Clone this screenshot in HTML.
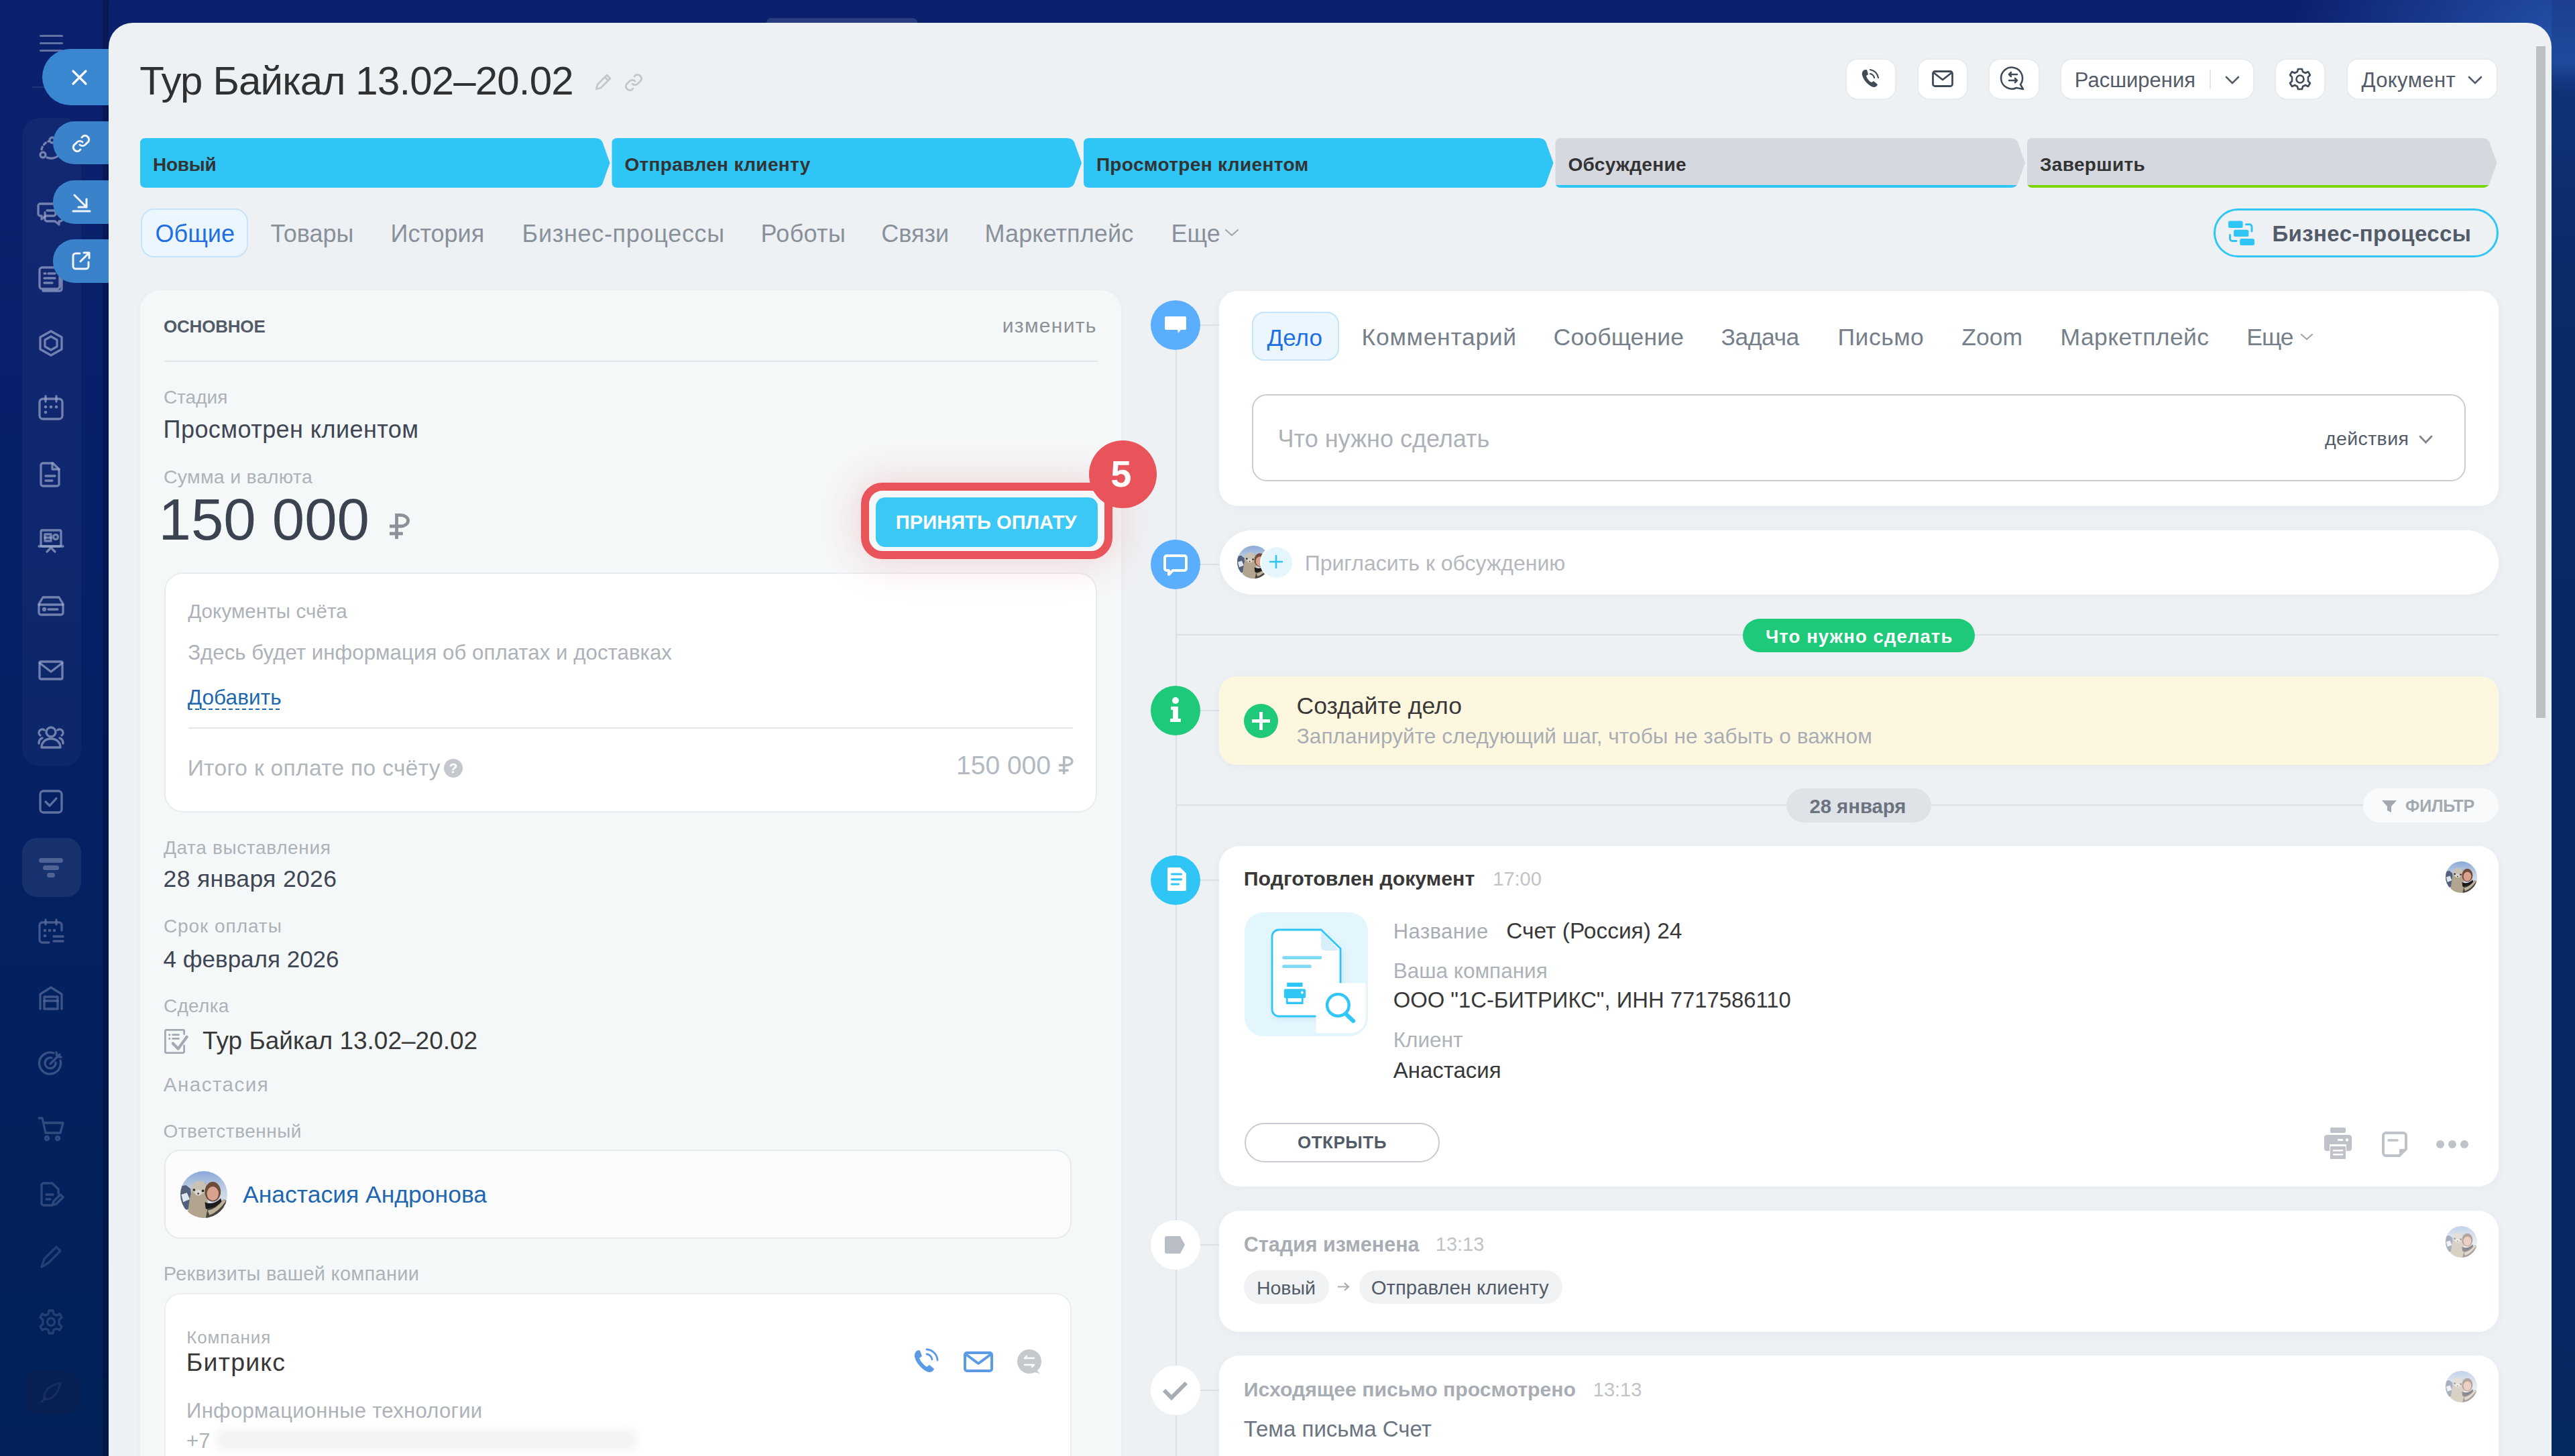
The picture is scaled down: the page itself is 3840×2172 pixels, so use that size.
<!DOCTYPE html><html><head><meta charset="utf-8"><title>Тур Байкал</title><style>*{margin:0;padding:0;box-sizing:border-box}
html,body{width:3840px;height:2172px;overflow:hidden}
body{position:relative;font-family:"Liberation Sans",sans-serif;background:#0b1d68}
.a{position:absolute}
.t{position:absolute;line-height:1;white-space:nowrap}
svg{overflow:visible}
</style></head><body><svg width="0" height="0" style="position:absolute"><defs><clipPath id="avc"><circle cx="50" cy="50" r="50"/></clipPath><linearGradient id="sky" x1="0" y1="0" x2="0" y2="1"><stop offset="0" stop-color="#8aa8d6"/><stop offset="0.45" stop-color="#c8d5e6"/><stop offset="1" stop-color="#eef2f6"/></linearGradient><symbol id="av" viewBox="0 0 100 100"><g clip-path="url(#avc)"><rect width="100" height="100" fill="url(#sky)"/><path d="M0 32 L12 30 L22 38 L24 80 L0 85z" fill="#52607c"/><path d="M2 50 L14 46 L20 60 L6 66z" fill="#dfe6ef"/><path d="M14 100 L20 58 L26 36 L40 22 L55 26 L58 60 L60 100z" fill="#b1a58f"/><ellipse cx="40" cy="36" rx="16" ry="15" fill="#c9c2b5"/><ellipse cx="38" cy="46" rx="7" ry="6" fill="#ddd8cf"/><circle cx="29" cy="40" r="2.6" fill="#2a2826"/><circle cx="48" cy="42" r="2.6" fill="#2a2826"/><circle cx="38" cy="48" r="2" fill="#3a3430"/><ellipse cx="69" cy="44" rx="17" ry="21" fill="#6e4c3a"/><ellipse cx="69" cy="48" rx="12.5" ry="15" fill="#d9a28c"/><path d="M52 66 Q70 74 86 58 L90 72 Q70 88 54 80z" fill="#1c1c1c"/><path d="M54 100 L58 80 Q75 80 92 60 L100 64 L100 100z" fill="#4a453d"/><path d="M58 84 Q76 82 92 60 L97 64 Q80 88 62 94z" fill="#bcb19b"/></g></symbol></defs></svg>
<div class="a" style="left:0.0px;top:0.0px;width:3840.0px;height:2172.0px;background:radial-gradient(ellipse 420px 260px at 3840px 60px,rgba(45,100,190,0.75),rgba(45,100,190,0) 100%),linear-gradient(180deg,#0c216e 0%,#07206a 35%,#03215f 70%,#012158 100%)"></div>
<div class="a" style="left:3805.0px;top:0.0px;width:35.0px;height:2172.0px;background:linear-gradient(180deg,#1b3f8e 0px,#1f4a9c 90px,#0f3278 135px,#0a2a6a 400px,#062766 1200px,#042862 2172px)"></div>
<div class="a" style="left:153.0px;top:0.0px;width:9.0px;height:2172.0px;background:rgba(0,0,20,0.25)"></div>
<div class="a" style="left:33.0px;top:176.0px;width:88.0px;height:967.0px;border-radius:26px;background:rgba(255,255,255,0.035)"></div>
<div class="a" style="left:33.0px;top:1250.0px;width:88.0px;height:88.0px;border-radius:22px;background:rgba(255,255,255,0.08)"></div>
<div class="a" style="left:38.0px;top:2046.0px;width:78.0px;height:63.0px;border-radius:18px;background:rgba(25,25,70,0.3)"></div>
<div class="a" style="left:59.0px;top:51.5px;width:35.0px;height:3.0px;background:rgba(200,210,235,0.45);border-radius:2px"></div>
<div class="a" style="left:59.0px;top:62.5px;width:35.0px;height:3.0px;background:rgba(200,210,235,0.45);border-radius:2px"></div>
<div class="a" style="left:59.0px;top:73.5px;width:35.0px;height:3.0px;background:rgba(200,210,235,0.45);border-radius:2px"></div>
<div class="a" style="left:48.0px;top:129.0px;width:52.0px;height:2.0px;background:rgba(255,255,255,0.08)"></div>
<svg class="a" style="left:56.0px;top:201.0px;opacity:1" width="40" height="40" viewBox="0 0 40 40"><g fill="none" stroke="rgba(160,172,205,0.68)" stroke-width="3.3" stroke-linecap="round" stroke-linejoin="round"><circle cx="22" cy="8" r="4"/><circle cx="8" cy="30" r="4"/><path d="M6 22a16 16 0 0 1 10-12" stroke-dasharray="4 4"/><path d="M14 34a16 16 0 0 0 18-4"/></g></svg>
<svg class="a" style="left:56.0px;top:296.0px;opacity:1" width="40" height="40" viewBox="0 0 40 40"><g fill="none" stroke="rgba(160,172,205,0.68)" stroke-width="3.3" stroke-linecap="round" stroke-linejoin="round"><path d="M4 8h20a3 3 0 0 1 3 3v12a3 3 0 0 1-3 3H12l-6 5v-5H4a3 3 0 0 1-3-3V11a3 3 0 0 1 3-3z"/><path d="M14 18h20a3 3 0 0 1 3 3v10a3 3 0 0 1-3 3h-2v5l-6-5H14a3 3 0 0 1-3-3V21"/></g></svg>
<svg class="a" style="left:56.0px;top:395.0px;opacity:1" width="40" height="40" viewBox="0 0 40 40"><g fill="none" stroke="rgba(160,172,205,0.68)" stroke-width="3.3" stroke-linecap="round" stroke-linejoin="round"><rect x="3" y="4" width="30" height="32" rx="4"/><path d="M36 10v26a3 3 0 0 1-3 3H8"/><path d="M10 13h2M16 13h10M10 20h16M10 27h12"/></g></svg>
<svg class="a" style="left:56.0px;top:492.0px;opacity:1" width="40" height="40" viewBox="0 0 40 40"><g fill="none" stroke="rgba(160,172,205,0.68)" stroke-width="3.3" stroke-linecap="round" stroke-linejoin="round"><path d="M20 2l16 9v18l-16 9-16-9V11z"/><path d="M20 10l9 5v10l-9 5-9-5V15z"/></g></svg>
<svg class="a" style="left:56.0px;top:589.0px;opacity:1" width="40" height="40" viewBox="0 0 40 40"><g fill="none" stroke="rgba(160,172,205,0.68)" stroke-width="3.3" stroke-linecap="round" stroke-linejoin="round"><rect x="3" y="6" width="34" height="30" rx="5"/><path d="M12 2v8M28 2v8"/></g><g fill="rgba(160,172,205,0.68)"><circle cx="12" cy="18" r="2.3"/><circle cx="20" cy="18" r="2.3"/><circle cx="28" cy="18" r="2.3"/><circle cx="12" cy="26" r="2.3"/></g></svg>
<svg class="a" style="left:56.0px;top:688.0px;opacity:1" width="40" height="40" viewBox="0 0 40 40"><g fill="none" stroke="rgba(160,172,205,0.68)" stroke-width="3.3" stroke-linecap="round" stroke-linejoin="round"><path d="M8 3h15l9 9v22a3 3 0 0 1-3 3H8a3 3 0 0 1-3-3V6a3 3 0 0 1 3-3z"/><path d="M22 3v9h10M12 22h14M12 29h10"/></g></svg>
<svg class="a" style="left:56.0px;top:787.0px;opacity:1" width="40" height="40" viewBox="0 0 40 40"><g fill="none" stroke="rgba(160,172,205,0.68)" stroke-width="3.3" stroke-linecap="round" stroke-linejoin="round"><path d="M2 28h36"/><rect x="5" y="4" width="30" height="24" rx="2"/><rect x="11" y="10" width="9" height="10"/><path d="M11 15h9"/><circle cx="27" cy="14" r="3.5"/><path d="M14 36l6-6 6 6"/></g></svg>
<svg class="a" style="left:56.0px;top:883.0px;opacity:1" width="40" height="40" viewBox="0 0 40 40"><g fill="none" stroke="rgba(160,172,205,0.68)" stroke-width="3.3" stroke-linecap="round" stroke-linejoin="round"><path d="M8 8h24l6 10v13a3 3 0 0 1-3 3H5a3 3 0 0 1-3-3V18z"/><path d="M2 19h36"/><circle cx="10" cy="26" r="1.5"/><path d="M16 26h14"/></g></svg>
<svg class="a" style="left:56.0px;top:980.0px;opacity:1" width="40" height="40" viewBox="0 0 40 40"><g fill="none" stroke="rgba(160,172,205,0.68)" stroke-width="3.3" stroke-linecap="round" stroke-linejoin="round"><rect x="3" y="7" width="34" height="26" rx="2"/><path d="M3 9l17 13 17-13"/></g></svg>
<svg class="a" style="left:56.0px;top:1079.0px;opacity:1" width="40" height="40" viewBox="0 0 40 40"><g fill="none" stroke="rgba(160,172,205,0.68)" stroke-width="3.3" stroke-linecap="round" stroke-linejoin="round"><circle cx="20" cy="13" r="7"/><path d="M6 36c0-8 6-13 14-13s14 5 14 13z"/><path d="M10 10a5 5 0 0 0-6 8M30 10a5 5 0 0 1 6 8M2 30c0-4 2-7 5-8M38 30c0-4-2-7-5-8"/></g></svg>
<svg class="a" style="left:56.0px;top:1176.0px;opacity:0.85" width="40" height="40" viewBox="0 0 40 40"><g fill="none" stroke="rgba(160,172,205,0.68)" stroke-width="3.3" stroke-linecap="round" stroke-linejoin="round"><rect x="4" y="4" width="32" height="32" rx="5"/><path d="M12 20l6 6 10-11"/></g></svg>
<svg class="a" style="left:56.0px;top:1274.0px;opacity:0.6" width="40" height="40" viewBox="0 0 40 40"><g fill="rgba(160,172,205,0.68)"><rect x="2" y="6" width="36" height="7" rx="3.5"/><rect x="8" y="17" width="24" height="7" rx="3.5"/><rect x="14" y="28" width="12" height="7" rx="3.5"/></g></svg>
<svg class="a" style="left:56.0px;top:1370.0px;opacity:0.6" width="40" height="40" viewBox="0 0 40 40"><g fill="none" stroke="rgba(160,172,205,0.68)" stroke-width="3.3" stroke-linecap="round" stroke-linejoin="round"><path d="M36 18V10a4 4 0 0 0-4-4H7a4 4 0 0 0-4 4v22a4 4 0 0 0 4 4h10"/><path d="M12 2v7M28 2v7M24 27h14M24 34h14"/></g><g fill="rgba(160,172,205,0.68)"><circle cx="11" cy="18" r="2.3"/><circle cx="18" cy="18" r="2.3"/><circle cx="25" cy="18" r="2.3"/><circle cx="11" cy="26" r="2.3"/></g></svg>
<svg class="a" style="left:56.0px;top:1469.0px;opacity:0.55" width="40" height="40" viewBox="0 0 40 40"><g fill="none" stroke="rgba(160,172,205,0.68)" stroke-width="3.3" stroke-linecap="round" stroke-linejoin="round"><path d="M4 36V14L20 4l16 10v22"/><rect x="10" y="18" width="20" height="18"/><path d="M10 24h20"/></g></svg>
<svg class="a" style="left:56.0px;top:1566.0px;opacity:0.5" width="40" height="40" viewBox="0 0 40 40"><g fill="none" stroke="rgba(160,172,205,0.68)" stroke-width="3.3" stroke-linecap="round" stroke-linejoin="round"><path d="M34 16a16 16 0 1 1-10-11"/><path d="M27 19a8 8 0 1 1-6-7"/><path d="M19 21l14-14M28 4l1 6 6 1"/></g></svg>
<svg class="a" style="left:56.0px;top:1664.0px;opacity:0.45" width="40" height="40" viewBox="0 0 40 40"><g fill="none" stroke="rgba(160,172,205,0.68)" stroke-width="3.3" stroke-linecap="round" stroke-linejoin="round"><path d="M2 4h5l5 22h22l4-15H10"/><circle cx="14" cy="34" r="2.5"/><circle cx="30" cy="34" r="2.5"/></g></svg>
<svg class="a" style="left:56.0px;top:1762.0px;opacity:0.42" width="40" height="40" viewBox="0 0 40 40"><g fill="none" stroke="rgba(160,172,205,0.68)" stroke-width="3.3" stroke-linecap="round" stroke-linejoin="round"><path d="M20 36H9a3 3 0 0 1-3-3V6a3 3 0 0 1 3-3h13l9 9v6"/><path d="M13 20h10M13 27h6M22 36l2-6 10-10 4 4-10 10z"/></g></svg>
<svg class="a" style="left:56.0px;top:1854.0px;opacity:0.32" width="40" height="40" viewBox="0 0 40 40"><g fill="none" stroke="rgba(160,172,205,0.68)" stroke-width="3.3" stroke-linecap="round" stroke-linejoin="round"><path d="M6 36l4-12 18-18 6 6-18 18z"/></g></svg>
<svg class="a" style="left:56.0px;top:1952.0px;opacity:0.32" width="40" height="40" viewBox="0 0 40 40"><g fill="none" stroke="rgba(160,172,205,0.68)" stroke-width="3.3" stroke-linecap="round" stroke-linejoin="round"><circle cx="20" cy="20" r="5.5"/><path d="M17 3h6l1 5 4 2 5-2 3 5-4 4v6l4 4-3 5-5-2-4 2-1 5h-6l-1-5-4-2-5 2-3-5 4-4v-6l-4-4 3-5 5 2 4-2z"/></g></svg>
<svg class="a" style="left:56.0px;top:2057.0px;opacity:0.15" width="40" height="40" viewBox="0 0 40 40"><g fill="none" stroke="rgba(160,172,205,0.68)" stroke-width="3.3" stroke-linecap="round" stroke-linejoin="round"><path d="M10 30c-2-8 4-20 24-24-4 20-16 26-24 24z"/><path d="M6 34l6-6"/></g></svg>
<div class="a" style="left:162.0px;top:34.0px;width:3643.0px;height:2266.0px;background:#eef1f4;border-radius:36px 36px 0 0"></div>
<div class="a" style="left:1143.0px;top:27.0px;width:225.0px;height:7.0px;background:rgba(255,255,255,0.12);border-radius:10px 10px 0 0"></div>
<div class="a" style="left:3782.0px;top:69.0px;width:14.0px;height:1002.0px;background:#bcc0c3"></div>
<div class="a" style="left:63.0px;top:73.0px;width:99.0px;height:84.0px;background:#3a87d1;border-radius:42px 0 0 42px"></div>
<svg class="a" style="left:107.0px;top:104.0px;" width="23" height="23" viewBox="0 0 23 23"><path d="M2 2L21 21M21 2L2 21" stroke="#fff" stroke-width="3.2" stroke-linecap="round"/></svg>
<div class="a" style="left:79.0px;top:181.0px;width:83.0px;height:64.0px;background:#3a82c9;border-radius:32px 0 0 32px"></div>
<div class="a" style="left:79.0px;top:269.0px;width:83.0px;height:65.0px;background:#3a82c9;border-radius:32px 0 0 32px"></div>
<div class="a" style="left:79.0px;top:357.0px;width:83.0px;height:65.0px;background:#3a82c9;border-radius:32px 0 0 32px"></div>
<svg class="a" style="left:106.0px;top:199.0px;" width="30" height="30" viewBox="0 0 30 30"><g fill="none" stroke="#f2f5f9" stroke-width="3" stroke-linecap="round"><path d="M13 17a6 6 0 0 0 8 0l5-5a6 6 0 0 0-8-8l-2 2"/><path d="M17 13a6 6 0 0 0-8 0l-5 5a6 6 0 0 0 8 8l2-2"/></g></svg>
<svg class="a" style="left:106.0px;top:287.0px;" width="30" height="30" viewBox="0 0 30 30"><g fill="none" stroke="#f2f5f9" stroke-width="3" stroke-linecap="round"><path d="M5 4l18 18M23 10v12H11M3 28h25"/></g></svg>
<svg class="a" style="left:106.0px;top:374.0px;" width="30" height="30" viewBox="0 0 30 30"><g fill="none" stroke="#f2f5f9" stroke-width="3" stroke-linecap="round" stroke-linejoin="round"><path d="M13 4H7a4 4 0 0 0-4 4v15a4 4 0 0 0 4 4h15a4 4 0 0 0 4-4v-6"/><path d="M14 16L27 3M19 3h8v8"/></g></svg>
<div class="t " style="top:90.7px;font-size:60px;color:#303030;left:208.2px;letter-spacing:-0.85px;">Тур Байкал 13.02–20.02</div>
<svg class="a" style="left:886.0px;top:110.0px;" width="26" height="26" viewBox="0 0 26 26"><g fill="none" stroke="#c3c6ca" stroke-width="2.5" stroke-linejoin="round"><path d="M3 23l2-7L19 2l5 5L10 21z"/><path d="M16 5l5 5"/></g></svg>
<svg class="a" style="left:930.0px;top:108.0px;" width="30" height="30" viewBox="0 0 30 30"><g fill="none" stroke="#c3c6ca" stroke-width="2.8" stroke-linecap="round"><path d="M13 17a6 6 0 0 0 8 0l5-5a6 6 0 0 0-8-8l-2 2"/><path d="M17 13a6 6 0 0 0-8 0l-5 5a6 6 0 0 0 8 8l2-2"/></g></svg>
<div class="a" style="left:2754.0px;top:88.5px;width:72.0px;height:58.5px;background:#fff;border-radius:16px;box-shadow:0 0 0 2px rgba(0,0,0,0.025)"></div>
<div class="a" style="left:2861.0px;top:88.5px;width:72.0px;height:58.5px;background:#fff;border-radius:16px;box-shadow:0 0 0 2px rgba(0,0,0,0.025)"></div>
<div class="a" style="left:2967.0px;top:88.5px;width:73.0px;height:58.5px;background:#fff;border-radius:16px;box-shadow:0 0 0 2px rgba(0,0,0,0.025)"></div>
<div class="a" style="left:3074.0px;top:88.5px;width:286.0px;height:58.5px;background:#fff;border-radius:16px;box-shadow:0 0 0 2px rgba(0,0,0,0.025)"></div>
<div class="a" style="left:3394.0px;top:88.5px;width:72.0px;height:58.5px;background:#fff;border-radius:16px;box-shadow:0 0 0 2px rgba(0,0,0,0.025)"></div>
<div class="a" style="left:3501.0px;top:88.5px;width:222.0px;height:58.5px;background:#fff;border-radius:16px;box-shadow:0 0 0 2px rgba(0,0,0,0.025)"></div>
<svg class="a" style="left:2775.0px;top:102.0px;" width="28" height="30" viewBox="0 0 28 30"><g fill="#404b58"><path d="M6 2c-3 1-5 4-4 8 2 7 7 13 14 17 3 2 6 1 8-1l1-2-6-5-3 2c-4-2-7-6-8-10l3-2-2-7z"/></g><g fill="none" stroke="#404b58" stroke-width="2.2" stroke-linecap="round"><path d="M14 8a8 8 0 0 1 6 6"/><path d="M14 2a14 14 0 0 1 12 12"/></g></svg>
<svg class="a" style="left:2881.0px;top:105.0px;" width="32" height="25" viewBox="0 0 32 25"><g fill="none" stroke="#404b58" stroke-width="2.8" stroke-linejoin="round"><rect x="1.5" y="1.5" width="29" height="22" rx="3"/><path d="M2 3l14 11L30 3"/></g></svg>
<svg class="a" style="left:2985.0px;top:100.0px;" width="35" height="35" viewBox="0 0 35 35"><g fill="none" stroke="#404b58" stroke-width="2.6" stroke-linecap="round" stroke-linejoin="round"><path d="M28 26A16 16 0 1 0 22 31l10 2z"/><path d="M11 11h12M11 11l3-3M11 11l3 3M23 20H11M23 20l-3-3M23 20l-3 3"/></g></svg>
<div class="t " style="top:104.4px;font-size:31px;color:#525c69;left:3093.8px;">Расширения</div>
<div class="a" style="left:3295.0px;top:104.0px;width:2.0px;height:28.0px;background:#e3e6e9"></div>
<svg class="a" style="left:3318.0px;top:113.0px;" width="22" height="13" viewBox="0 0 22 13"><path d="M2 2l9 9 9-9" fill="none" stroke="#525c69" stroke-width="2.6" stroke-linecap="round"/></svg>
<svg class="a" style="left:3412.0px;top:100.0px;" width="36" height="36" viewBox="0 0 36 36"><g fill="none" stroke="#404b58" stroke-width="2.6" stroke-linejoin="round"><circle cx="18" cy="18" r="5.5"/><path d="M15 3h6l1 4 4 2 4-2 3 5-3 3v6l3 3-3 5-4-2-4 2-1 4h-6l-1-4-4-2-4 2-3-5 3-3v-6l-3-3 3-5 4 2 4-2z"/></g></svg>
<div class="t " style="top:104.4px;font-size:31px;color:#525c69;left:3521.4px;letter-spacing:0.4px;">Документ</div>
<svg class="a" style="left:3680.0px;top:113.0px;" width="22" height="13" viewBox="0 0 22 13"><path d="M2 2l9 9 9-9" fill="none" stroke="#525c69" stroke-width="2.6" stroke-linecap="round"/></svg>
<svg class="a" style="left:0.0px;top:206.0px;" width="3840" height="74" viewBox="0 0 3840 74"><path d="M217.0,0 H887.5 Q895.5,0 898.5,6 L909.5,37.0 L898.5,68 Q895.5,74 887.5,74 H217.0 Q209.0,74 209.0,66 V8 Q209.0,0 217.0,0 Z" fill="#2fc6f6"/><path d="M920.5,0 H1591.0 Q1599.0,0 1602.0,6 L1613.0,37.0 L1602.0,68 Q1599.0,74 1591.0,74 H920.5 Q912.5,74 912.5,66 V8 Q912.5,0 920.5,0 Z" fill="#2fc6f6"/><path d="M1624.0,0 H2294.5 Q2302.5,0 2305.5,6 L2316.5,37.0 L2305.5,68 Q2302.5,74 2294.5,74 H1624.0 Q1616.0,74 1616.0,66 V8 Q1616.0,0 1624.0,0 Z" fill="#2fc6f6"/><path d="M2327.5,0 H2998.0 Q3006.0,0 3009.0,6 L3020.0,37.0 L3009.0,68 Q3006.0,74 2998.0,74 H2327.5 Q2319.5,74 2319.5,66 V8 Q2319.5,0 2327.5,0 Z" fill="#d5d8de"/><path d="M3031.0,0 H3701.5 Q3709.5,0 3712.5,6 L3723.5,37.0 L3712.5,68 Q3709.5,74 3701.5,74 H3031.0 Q3023.0,74 3023.0,66 V8 Q3023.0,0 3031.0,0 Z" fill="#d5d8de"/><clipPath id="c4"><path d="M2327.5,0 H2998.0 Q3006.0,0 3009.0,6 L3020.0,37.0 L3009.0,68 Q3006.0,74 2998.0,74 H2327.5 Q2319.5,74 2319.5,66 V8 Q2319.5,0 2327.5,0 Z"/></clipPath><rect x="2319.5" y="70" width="700.5" height="4" fill="#2fc6f6" clip-path="url(#c4)"/><clipPath id="c5"><path d="M3031.0,0 H3701.5 Q3709.5,0 3712.5,6 L3723.5,37.0 L3712.5,68 Q3709.5,74 3701.5,74 H3031.0 Q3023.0,74 3023.0,66 V8 Q3023.0,0 3031.0,0 Z"/></clipPath><rect x="3023.0" y="70" width="700.5" height="4" fill="#7bd500" clip-path="url(#c5)"/></svg>
<div class="t " style="top:231.8px;font-size:28px;color:#333;left:227.9px;font-weight:700;letter-spacing:-0.2px;">Новый</div>
<div class="t " style="top:231.8px;font-size:28px;color:#333;left:931.4px;font-weight:700;letter-spacing:0.35px;">Отправлен клиенту</div>
<div class="t " style="top:231.8px;font-size:28px;color:#333;left:1634.9px;font-weight:700;letter-spacing:0.35px;">Просмотрен клиентом</div>
<div class="t " style="top:231.8px;font-size:28px;color:#333;left:2338.4px;font-weight:700;letter-spacing:0.35px;">Обсуждение</div>
<div class="t " style="top:231.8px;font-size:28px;color:#333;left:3041.9px;font-weight:700;letter-spacing:0.35px;">Завершить</div>
<div class="a" style="left:209.6px;top:311.0px;width:160.8px;height:73.0px;background:#ebf6fe;border:2px solid #c3e4fb;border-radius:20px"></div>
<div class="t " style="top:331.2px;font-size:36px;color:#1d6fe3;left:231.6px;">Общие</div>
<div class="t " style="top:331.2px;font-size:36px;color:#88909a;left:403.6px;">Товары</div>
<div class="t " style="top:331.2px;font-size:36px;color:#88909a;left:582.6px;">История</div>
<div class="t " style="top:331.2px;font-size:36px;color:#88909a;left:778.6px;letter-spacing:0.7px;">Бизнес-процессы</div>
<div class="t " style="top:331.2px;font-size:36px;color:#88909a;left:1134.6px;letter-spacing:0.3px;">Роботы</div>
<div class="t " style="top:331.2px;font-size:36px;color:#88909a;left:1314.2px;">Связи</div>
<div class="t " style="top:331.2px;font-size:36px;color:#88909a;left:1468.6px;letter-spacing:0.1px;">Маркетплейс</div>
<div class="t " style="top:331.2px;font-size:36px;color:#88909a;left:1746.6px;">Еще</div>
<svg class="a" style="left:1826.0px;top:341.0px;" width="22" height="13" viewBox="0 0 22 13"><path d="M2 2l9 8 9-8" fill="none" stroke="#a1a7ae" stroke-width="2.2" stroke-linecap="round"/></svg>
<div class="a" style="left:3301.0px;top:311.0px;width:425.0px;height:73.0px;border:3px solid #2fc6f6;border-radius:37px"></div>
<svg class="a" style="left:3323.0px;top:330.0px;" width="40" height="37" viewBox="0 0 40 37"><g fill="#2fc6f6"><rect x="0" y="-0.5" width="21.6" height="10.5" rx="2.5"/><rect x="8" y="12.7" width="22.4" height="10.2" rx="2.5"/><rect x="17.2" y="25.9" width="21.8" height="10" rx="2.5"/></g><g fill="none" stroke="#2fc6f6" stroke-width="3" stroke-linecap="round"><path d="M26.5,4.7 H31.5 a3.5,3.5 0 0 1 3.5,3.5 V15"/><path d="M2.5,20.5 V26 a3.5,3.5 0 0 0 3.5,3.5 H12"/></g></svg>
<div class="t " style="top:332.1px;font-size:33px;color:#525c69;left:3388.4px;font-weight:700;letter-spacing:0.4px;">Бизнес-процессы</div>
<div class="a" style="left:209.0px;top:433.0px;width:1463.0px;height:1867.0px;background:#f5f8f9;border-radius:30px;box-shadow:0 2px 10px rgba(60,70,90,0.03)"></div>
<div class="t " style="top:474.0px;font-size:26px;color:#525c69;left:244.0px;font-weight:700;letter-spacing:-0.2px;">ОСНОВНОЕ</div>
<div class="t " style="top:471.0px;font-size:30px;color:#8e9196;left:1494.8px;letter-spacing:1.3px;">изменить</div>
<div class="a" style="left:245.0px;top:538.0px;width:1392.0px;height:2.0px;background:#e3e6ea"></div>
<div class="t " style="top:579.3px;font-size:28px;color:#adb2b8;left:243.9px;">Стадия</div>
<div class="t " style="top:622.5px;font-size:36px;color:#3e4654;left:243.6px;letter-spacing:0.45px;">Просмотрен клиентом</div>
<div class="t " style="top:696.9px;font-size:28.5px;color:#adb2b8;left:243.9px;letter-spacing:0.3px;">Сумма и валюта</div>
<div class="t " style="top:731.3px;font-size:87px;color:#3b4250;left:236.5px;">150 000</div>
<svg class="a" style="left:581.0px;top:766.0px;" width="30" height="38" viewBox="0 0 30 38"><g fill="none" stroke="#8a9199" stroke-width="4.8"><path d="M10.50,38 V2.40 H16.50 A11.10,8.30 0 0 1 16.50,19.00 H0"/><path d="M0,30.02 H19.80"/></g></svg>
<div class="a" style="left:245.0px;top:854.0px;width:1391.0px;height:358.0px;background:#fff;border:2px solid #e9ecef;border-radius:28px"></div>
<div class="t " style="top:897.3px;font-size:29.5px;color:#adb2b8;left:280.2px;letter-spacing:0.1px;">Документы счёта</div>
<div class="t " style="top:958.1px;font-size:31.2px;color:#adb2b8;left:280.2px;letter-spacing:0.05px;">Здесь будет информация об оплатах и доставках</div>
<div class="t " style="top:1024.5px;font-size:31.5px;color:#2067b0;left:279.7px;letter-spacing:0.1px;">Добавить</div>
<div class="a" style="left:281.0px;top:1056.5px;width:140.0px;height:2.0px;background:repeating-linear-gradient(90deg,#2067b0 0 6px,transparent 6px 10px)"></div>
<div class="a" style="left:281.0px;top:1084.5px;width:1319.0px;height:2.0px;background:#e3e6ea"></div>
<div class="t " style="top:1128.6px;font-size:33.5px;color:#b1b6bc;left:279.7px;letter-spacing:0.35px;">Итого к оплате по счёту</div>
<div class="a" style="left:662px;top:1132px;width:28px;height:28px;border-radius:50%;background:#c4c8cd;color:#fff;font:700 21px/28px 'Liberation Sans',sans-serif;text-align:center">?</div>
<div class="t " style="top:1121.7px;font-size:39px;color:#b3b9c0;right:2273.0px;">150 000</div>
<svg class="a" style="left:1579.0px;top:1128.0px;" width="22" height="27" viewBox="0 0 22 27"><g fill="none" stroke="#b3b9c0" stroke-width="3.5"><path d="M7.69,27 V1.75 H12.10 A8.15,5.88 0 0 1 12.10,13.50 H0"/><path d="M0,21.33 H14.52"/></g></svg>
<div class="a" style="left:1284.0px;top:720.0px;width:375.0px;height:114.0px;border:12px solid #e8545a;border-radius:32px;background:#f5f8f9;box-shadow:0 0 55px 10px rgba(232,84,90,0.19)"></div>
<div class="a" style="left:1306.0px;top:742.0px;width:331.0px;height:74.0px;background:#3bc8f5;border-radius:14px"></div>
<div class="t " style="top:765.0px;font-size:29px;color:#fff;left:1335.8px;font-weight:700;letter-spacing:0.1px;">ПРИНЯТЬ ОПЛАТУ</div>
<div class="a" style="left:1623.5px;top:657px;width:101px;height:101px;border-radius:50%;background:#e8545a"></div>
<div class="t " style="top:678.6px;font-size:56px;color:#fff;left:1671.8px;font-weight:700;transform:translateX(-50%);">5</div>
<div class="t " style="top:1251.3px;font-size:28px;color:#adb2b8;left:243.9px;letter-spacing:0.65px;">Дата выставления</div>
<div class="t " style="top:1293.7px;font-size:35.5px;color:#3e4654;left:243.6px;letter-spacing:0.35px;">28 января 2026</div>
<div class="t " style="top:1368.3px;font-size:28px;color:#adb2b8;left:243.9px;letter-spacing:0.95px;">Срок оплаты</div>
<div class="t " style="top:1413.2px;font-size:35px;color:#3e4654;left:243.6px;">4 февраля 2026</div>
<div class="t " style="top:1487.3px;font-size:28px;color:#adb2b8;left:243.9px;letter-spacing:0.3px;">Сделка</div>
<svg class="a" style="left:245.0px;top:1535.0px;" width="37" height="37" viewBox="0 0 37 37"><g fill="none" stroke="#a3a9b2" stroke-width="2.8" stroke-linecap="round" stroke-linejoin="round"><path d="M29.6,7.5 V3 a1.6,1.6 0 0 0 -1.6,-1.6 H3 a1.6,1.6 0 0 0 -1.6,1.6 V34 a1.6,1.6 0 0 0 1.6,1.6 H28 a1.6,1.6 0 0 0 1.6,-1.6 V25"/><path d="M12.5,8.7 H21.5 M12.5,14.4 H21.5"/></g><g fill="#a3a9b2"><circle cx="7.7" cy="8.7" r="1.6"/><circle cx="7.7" cy="14.4" r="1.6"/></g><path d="M12.8,21.6 L20.7,29.4 L33.6,11.8" fill="none" stroke="#a3a9b2" stroke-width="4.2" stroke-linecap="round" stroke-linejoin="round"/></svg>
<div class="t " style="top:1534.2px;font-size:37px;color:#383838;left:302.0px;">Тур Байкал 13.02–20.02</div>
<div class="t " style="top:1602.7px;font-size:29.5px;color:#adb2b8;left:243.8px;letter-spacing:1.5px;">Анастасия</div>
<div class="t " style="top:1673.7px;font-size:28px;color:#adb2b8;left:243.5px;letter-spacing:0.5px;">Ответственный</div>
<div class="a" style="left:245.0px;top:1715.0px;width:1353.0px;height:133.0px;background:#fcfcfd;border:2px solid #e8eaed;border-radius:24px"></div>
<svg class="a" style="left:269px;top:1746.5px;opacity:1;filter:blur(0.5px)" width="70" height="70" viewBox="0 0 100 100"><use href="#av"/></svg>
<div class="t " style="top:1764.5px;font-size:35.5px;color:#2067b0;left:362.0px;">Анастасия Андронова</div>
<div class="t " style="top:1886.4px;font-size:29px;color:#adb2b8;left:243.8px;letter-spacing:0.3px;">Реквизиты вашей компании</div>
<div class="a" style="left:245.0px;top:1929.0px;width:1353.0px;height:371.0px;background:#fff;border:2px solid #eceef0;border-radius:24px"></div>
<div class="t " style="top:1981.7px;font-size:26px;color:#adb2b8;left:278.3px;letter-spacing:0.85px;">Компания</div>
<div class="t " style="top:2013.9px;font-size:37.5px;color:#383838;left:277.8px;letter-spacing:1.2px;">Битрикс</div>
<div class="t " style="top:2088.8px;font-size:31px;color:#adb2b8;left:278.1px;letter-spacing:0.3px;">Информационные технологии</div>
<div class="t " style="top:2133.8px;font-size:31px;color:#adb2b8;left:278.1px;">+7</div>
<div class="a" style="left:322.0px;top:2132.0px;width:628.0px;height:32.0px;background:rgba(200,204,210,0.22);filter:blur(6px);border-radius:10px"></div>
<svg class="a" style="left:1362.0px;top:2011.0px;" width="38" height="40" viewBox="0 0 38 40"><g fill="#5b9be6"><path d="M8 3c-4 1-7 5-6 10 2 9 9 17 18 22 4 2 8 1 10-2l1-2-7-6-4 3c-5-3-9-8-11-13l4-3-3-8z"/></g><g fill="none" stroke="#5b9be6" stroke-width="2.8" stroke-linecap="round"><path d="M20 9a10 10 0 0 1 8 8"/><path d="M20 2a17 17 0 0 1 16 16"/></g></svg>
<svg class="a" style="left:1437.0px;top:2015.5px;" width="44" height="31" viewBox="0 0 44 31"><g fill="none" stroke="#5b9be6" stroke-width="4" stroke-linejoin="round"><rect x="2" y="2" width="40" height="27" rx="3"/><path d="M3 4l19 14L41 4"/></g></svg>
<svg class="a" style="left:1517.0px;top:2013.0px;" width="38" height="38" viewBox="0 0 38 38"><circle cx="18" cy="18" r="18" fill="#c5c9ce"/><path d="M28 30l6 6-9-2z" fill="#c5c9ce"/><g fill="none" stroke="#fff" stroke-width="2.4" stroke-linecap="round"><path d="M11 13h14M11 13l3-3M25 23H11M25 23l-3 3"/></g></svg>
<div class="a" style="left:1753.0px;top:485.0px;width:2.0px;height:1815.0px;background:#dcdfe3"></div>
<div class="a" style="left:1818.0px;top:434.0px;width:1908.0px;height:321.0px;background:#fff;border-radius:28px;box-shadow:0 2px 14px rgba(60,70,90,0.05)"></div>
<div class="a" style="left:1716px;top:448px;width:74px;height:74px;border-radius:50%;background:#5aaefd;"></div>
<div class="a" style="left:1790.0px;top:484.0px;width:28.0px;height:2.0px;background:#dcdfe3"></div>
<svg class="a" style="left:1716.0px;top:448.0px;" width="74" height="74" viewBox="0 0 74 74"><path d="M23 24h28a2 2 0 0 1 2 2v16a2 2 0 0 1-2 2H45l-4 5-1-5H23a2 2 0 0 1-2-2V26a2 2 0 0 1 2-2z" fill="#fff"/></svg>
<div class="a" style="left:1867.0px;top:465.0px;width:130.0px;height:72.5px;background:#ebf6fe;border:2px solid #c3e4fb;border-radius:18px"></div>
<div class="t " style="top:486.4px;font-size:35px;color:#1d6fe3;left:1889.6px;">Дело</div>
<div class="t " style="top:485.9px;font-size:35.5px;color:#76808b;left:2030.6px;letter-spacing:0.7px;">Комментарий</div>
<div class="t " style="top:485.9px;font-size:35.5px;color:#76808b;left:2316.6px;letter-spacing:0.15px;">Сообщение</div>
<div class="t " style="top:485.9px;font-size:35.5px;color:#76808b;left:2566.6px;letter-spacing:-0.5px;">Задача</div>
<div class="t " style="top:485.9px;font-size:35.5px;color:#76808b;left:2740.6px;letter-spacing:0.5px;">Письмо</div>
<div class="t " style="top:485.9px;font-size:35.5px;color:#76808b;left:2925.3px;">Zoom</div>
<div class="t " style="top:485.9px;font-size:35.5px;color:#76808b;left:3072.6px;letter-spacing:0.4px;">Маркетплейс</div>
<div class="t " style="top:485.9px;font-size:35.5px;color:#76808b;left:3350.3px;letter-spacing:-1px;">Еще</div>
<svg class="a" style="left:3430.0px;top:497.0px;" width="20" height="12" viewBox="0 0 20 12"><path d="M2 2l8 7 8-7" fill="none" stroke="#a1a7ae" stroke-width="2.2" stroke-linecap="round"/></svg>
<div class="a" style="left:1867.0px;top:588.0px;width:1810.0px;height:130.0px;border:2px solid #c8ccd1;border-radius:22px"></div>
<div class="t " style="top:637.3px;font-size:36px;color:#adb2b8;left:1905.6px;">Что нужно сделать</div>
<div class="t " style="top:639.9px;font-size:28.5px;color:#525c69;left:3466.9px;letter-spacing:0.4px;">действия</div>
<svg class="a" style="left:3607.0px;top:649.0px;" width="21" height="14" viewBox="0 0 21 14"><path d="M2 2l8.5 9 8.5-9" fill="none" stroke="#7d8690" stroke-width="2.8" stroke-linecap="round"/></svg>
<div class="a" style="left:1819.0px;top:791.0px;width:1907.0px;height:96.0px;background:#fff;border-radius:48px;box-shadow:0 2px 14px rgba(60,70,90,0.05)"></div>
<div class="a" style="left:1716px;top:805px;width:74px;height:74px;border-radius:50%;background:#5aaefd;"></div>
<div class="a" style="left:1790.0px;top:841.0px;width:28.0px;height:2.0px;background:#dcdfe3"></div>
<svg class="a" style="left:1716.0px;top:805.0px;" width="74" height="74" viewBox="0 0 74 74"><path d="M24 24h26a3 3 0 0 1 3 3v16a3 3 0 0 1-3 3H33l-6 6v-6h-3a3 3 0 0 1-3-3V27a3 3 0 0 1 3-3z" fill="none" stroke="#fff" stroke-width="4" stroke-linejoin="round"/></svg>
<svg class="a" style="left:1845px;top:814px;opacity:1;filter:blur(0.5px)" width="49" height="49" viewBox="0 0 100 100"><use href="#av"/></svg>
<div class="a" style="left:1878.5px;top:813.5px;width:50px;height:50px;border-radius:50%;background:#e5f6fd;border:2px solid #fff"></div>
<svg class="a" style="left:1891.0px;top:826.0px;" width="24" height="24" viewBox="0 0 24 24"><path d="M12 2v20M2 12h20" stroke="#2fc6f6" stroke-width="2.6"/></svg>
<div class="t " style="top:824.3px;font-size:32px;color:#b4b8be;left:1945.7px;">Пригласить к обсуждению</div>
<div class="a" style="left:1755.0px;top:945.6px;width:1971.0px;height:2.0px;background:#dcdfe3"></div>
<div class="a" style="left:2598.5px;top:923.0px;width:346.5px;height:50.0px;background:#1ec97a;border-radius:25px"></div>
<div class="t " style="top:935.7px;font-size:27.5px;color:#fff;left:2632.9px;font-weight:700;letter-spacing:1.1px;">Что нужно сделать</div>
<div class="a" style="left:1716px;top:1023px;width:74px;height:74px;border-radius:50%;background:#1ec97a;"></div>
<div class="a" style="left:1790.0px;top:1059.0px;width:28.0px;height:2.0px;background:#dcdfe3"></div>
<svg class="a" style="left:1716.0px;top:1023.0px;" width="74" height="74" viewBox="0 0 74 74"><circle cx="37" cy="22" r="5" fill="#fff"/><path d="M30 31h11v18h4v5H29v-5h4V36h-3z" fill="#fff"/></svg>
<div class="a" style="left:1818.0px;top:1009.0px;width:1908.0px;height:132.0px;background:#fef7e0;border-radius:26px;box-shadow:0 2px 14px rgba(60,70,90,0.05)"></div>
<div class="a" style="left:1855px;top:1049.5px;width:51px;height:51px;border-radius:50%;background:#1ec97a"></div>
<svg class="a" style="left:1855.0px;top:1049.5px;" width="51" height="51" viewBox="0 0 51 51"><path d="M25.5 12v27M12 25.5h27" stroke="#fff" stroke-width="5"/></svg>
<div class="t " style="top:1036.3px;font-size:35.5px;color:#383838;left:1933.6px;">Создайте дело</div>
<div class="t " style="top:1082.6px;font-size:31.5px;color:#a8adb4;left:1933.7px;letter-spacing:0.1px;">Запланируйте следующий шаг, чтобы не забыть о важном</div>
<div class="a" style="left:1755.0px;top:1199.6px;width:1971.0px;height:2.0px;background:#dcdfe3"></div>
<div class="a" style="left:2664.0px;top:1176.0px;width:216.0px;height:51.0px;background:#dfe3e7;border-radius:26px"></div>
<div class="t " style="top:1188.2px;font-size:29.3px;color:#6a737f;left:2698.4px;font-weight:700;">28 января</div>
<div class="a" style="left:3524.0px;top:1176.0px;width:202.0px;height:51.0px;background:#f9fafb;border-radius:26px"></div>
<svg class="a" style="left:3551.0px;top:1193.0px;" width="24" height="20" viewBox="0 0 24 20"><path d="M1 1h22l-8 9v9l-6-3V10z" fill="#a3a9b1"/></svg>
<div class="t " style="top:1189.8px;font-size:25px;color:#a3a9b1;left:3587.0px;font-weight:700;letter-spacing:-0.2px;">ФИЛЬТР</div>
<div class="a" style="left:1818.0px;top:1262.0px;width:1908.0px;height:508.0px;background:#fff;border-radius:30px;box-shadow:0 2px 14px rgba(60,70,90,0.05)"></div>
<div class="a" style="left:1716px;top:1276px;width:74px;height:74px;border-radius:50%;background:#2fc6f6;"></div>
<div class="a" style="left:1790.0px;top:1312.0px;width:28.0px;height:2.0px;background:#dcdfe3"></div>
<svg class="a" style="left:1716.0px;top:1276.0px;" width="74" height="74" viewBox="0 0 74 74"><path d="M27 18h17l9 9v24a2 2 0 0 1-2 2H27a2 2 0 0 1-2-2V20a2 2 0 0 1 2-2z" fill="#fff"/><g stroke="#2fc6f6" stroke-width="3.2" stroke-linecap="round"><path d="M31.5 28h14M31.5 35.8h14M31.5 43h10"/></g></svg>
<div class="t " style="top:1296.3px;font-size:30.3px;color:#383838;left:1854.8px;font-weight:700;">Подготовлен документ</div>
<div class="t " style="top:1297.4px;font-size:29px;color:#c0c4c9;left:2226.3px;">17:00</div>
<svg class="a" style="left:3647px;top:1285px;opacity:1;filter:blur(0.5px)" width="47" height="47" viewBox="0 0 100 100"><use href="#av"/></svg>
<div class="a" style="left:1856.0px;top:1360.5px;width:184.0px;height:185.0px;background:#e3f6fd;border-radius:28px"></div>
<svg class="a" style="left:1855.5px;top:1359.8px;" width="185" height="186" viewBox="0 0 185 186"><defs><filter id="sh" x="-30%" y="-30%" width="160%" height="160%"><feGaussianBlur stdDeviation="5"/></filter></defs><path d="M52,31 H114 L147,61 V150 a10,10 0 0 1 -10,10 H52 a10,10 0 0 1 -10,-10 V41 a10,10 0 0 1 10,-10 Z" fill="#9fc9da" opacity="0.35" filter="url(#sh)"/><path d="M51,27 H114 L143,55 V146 a10,10 0 0 1 -10,10 H51 a10,10 0 0 1 -10,-10 V37 a10,10 0 0 1 10,-10 Z" fill="#fff" stroke="#2fc6f6" stroke-width="2.8"/><path d="M114,28.5 V52 a6,6 0 0 0 6,6 H141.5 Z" fill="#d6effb"/><g stroke="#7fd9f9" stroke-width="4.8" stroke-linecap="round"><path d="M58.5,68.7 H113"/><path d="M58.5,81.7 H97.5"/></g><g fill="#2fc6f6"><rect x="63.2" y="105.8" width="23.3" height="6.2"/><rect x="58.8" y="115.2" width="32.3" height="13.9" rx="2.5"/><rect x="61.8" y="124" width="25.8" height="14" rx="1.5"/></g><rect x="64.6" y="129.1" width="20.3" height="5.5" fill="#fff"/><circle cx="85.8" cy="120.5" r="1.9" fill="#fff"/><path d="M133,106.5 H180.6 V159 a22,22 0 0 1 -22,22 H106.5 V133 a26.5,26.5 0 0 1 26.5,-26.5 Z" fill="#fff"/><circle cx="139.4" cy="139.4" r="16.3" fill="none" stroke="#2fc6f6" stroke-width="4.4"/><path d="M151.5,153 L162,163" stroke="#2fc6f6" stroke-width="6.2" stroke-linecap="round"/></svg>
<div class="t " style="top:1373.8px;font-size:31px;color:#a8adb4;left:2077.8px;letter-spacing:0.4px;">Название</div>
<div class="t " style="top:1371.6px;font-size:33.5px;color:#383838;left:2246.3px;">Счет (Россия) 24</div>
<div class="t " style="top:1433.3px;font-size:31.5px;color:#adb2b8;left:2077.7px;">Ваша компания</div>
<div class="t " style="top:1476.2px;font-size:32.8px;color:#383838;left:2077.7px;">ООО &quot;1С-БИТРИКС&quot;, ИНН 7717586110</div>
<div class="t " style="top:1535.8px;font-size:31.5px;color:#adb2b8;left:2077.7px;">Клиент</div>
<div class="t " style="top:1579.5px;font-size:33px;color:#383838;left:2077.7px;">Анастасия</div>
<div class="a" style="left:1856.0px;top:1674.5px;width:290.5px;height:59.0px;border:2px solid #c6cbd1;border-radius:30px"></div>
<div class="t " style="top:1691.3px;font-size:26px;color:#525c69;left:1935.0px;font-weight:700;letter-spacing:0.5px;">ОТКРЫТЬ</div>
<svg class="a" style="left:3466.0px;top:1682.0px;" width="41" height="47" viewBox="0 0 41 47"><g fill="#bfc3c9"><rect x="9" y="0" width="23" height="8" rx="2"/><path d="M4 11h33a4 4 0 0 1 4 4v16a4 4 0 0 1-4 4h-4V25H8v10H4a4 4 0 0 1-4-4V15a4 4 0 0 1 4-4z"/><rect x="9" y="28" width="23" height="19" rx="1"/></g><g fill="#fff"><rect x="20" y="17" width="8" height="3"/><circle cx="34" cy="18.5" r="2.2"/><rect x="13" y="33" width="15" height="2.5"/><rect x="13" y="39" width="15" height="2.5"/></g></svg>
<svg class="a" style="left:3552.0px;top:1688.0px;" width="38" height="38" viewBox="0 0 38 38"><path d="M6 2h26a4 4 0 0 1 4 4v20l-10 10H6a4 4 0 0 1-4-4V6a4 4 0 0 1 4-4z" fill="none" stroke="#bfc3c9" stroke-width="4" stroke-linejoin="round"/><path d="M10 13h13" stroke="#bfc3c9" stroke-width="3.5" stroke-linecap="round"/><path d="M36 26H28a2 2 0 0 0-2 2v8" fill="#bfc3c9"/></svg>
<div class="a" style="left:3633px;top:1700.5px;width:12px;height:12px;border-radius:50%;background:#bfc3c9"></div>
<div class="a" style="left:3651px;top:1700.5px;width:12px;height:12px;border-radius:50%;background:#bfc3c9"></div>
<div class="a" style="left:3669px;top:1700.5px;width:12px;height:12px;border-radius:50%;background:#bfc3c9"></div>
<div class="a" style="left:1818.0px;top:1805.6px;width:1908.0px;height:181.7px;background:#fff;border-radius:30px;box-shadow:0 2px 14px rgba(60,70,90,0.05)"></div>
<div class="a" style="left:1716px;top:1820px;width:74px;height:74px;border-radius:50%;background:#fff;"></div>
<div class="a" style="left:1790.0px;top:1856.0px;width:28.0px;height:2.0px;background:#dcdfe3"></div>
<svg class="a" style="left:1716.0px;top:1820.0px;" width="74" height="74" viewBox="0 0 74 74"><path d="M21 27a3 3 0 0 1 3-3h20l7 13-7 13H24a3 3 0 0 1-3-3z" fill="#b9bec6"/></svg>
<div class="t " style="top:1840.9px;font-size:30.5px;color:#a8adb4;left:1854.8px;font-weight:700;">Стадия изменена</div>
<div class="t " style="top:1842.1px;font-size:29px;color:#c0c4c9;left:2140.8px;">13:13</div>
<svg class="a" style="left:3647px;top:1829px;opacity:0.5;filter:blur(0.5px)" width="47" height="47" viewBox="0 0 100 100"><use href="#av"/></svg>
<div class="a" style="left:1855.0px;top:1894.5px;width:127.0px;height:50.8px;background:#f1f2f3;border-radius:26px"></div>
<div class="t " style="top:1906.7px;font-size:28.5px;color:#525c69;left:1873.9px;">Новый</div>
<svg class="a" style="left:1994.0px;top:1912.0px;" width="19" height="15" viewBox="0 0 19 15"><path d="M1 7.5h15M11 2l6 5.5-6 5.5" fill="none" stroke="#a8adb4" stroke-width="2.2"/></svg>
<div class="a" style="left:2027.0px;top:1894.5px;width:303.0px;height:50.8px;background:#f1f2f3;border-radius:26px"></div>
<div class="t " style="top:1906.0px;font-size:29.3px;color:#525c69;left:2044.8px;">Отправлен клиенту</div>
<div class="a" style="left:1818.0px;top:2022.0px;width:1908.0px;height:278.0px;background:#fff;border-radius:30px;box-shadow:0 2px 14px rgba(60,70,90,0.05)"></div>
<div class="a" style="left:1716px;top:2036.5px;width:74px;height:74px;border-radius:50%;background:#fff;"></div>
<div class="a" style="left:1790.0px;top:2072.5px;width:28.0px;height:2.0px;background:#dcdfe3"></div>
<svg class="a" style="left:1716.0px;top:2036.5px;" width="74" height="74" viewBox="0 0 74 74"><path d="M20 37l11 11 22-22" fill="none" stroke="#a8adb4" stroke-width="6"/></svg>
<div class="t " style="top:2057.7px;font-size:30.2px;color:#a8adb4;left:1854.8px;font-weight:700;">Исходящее письмо просмотрено</div>
<div class="t " style="top:2058.7px;font-size:29px;color:#c0c4c9;left:2375.8px;">13:13</div>
<svg class="a" style="left:3647px;top:2045px;opacity:0.5;filter:blur(0.5px)" width="47" height="47" viewBox="0 0 100 100"><use href="#av"/></svg>
<div class="t " style="top:2115.1px;font-size:33px;color:#6b7480;left:1854.7px;">Тема письма Счет</div></body></html>
